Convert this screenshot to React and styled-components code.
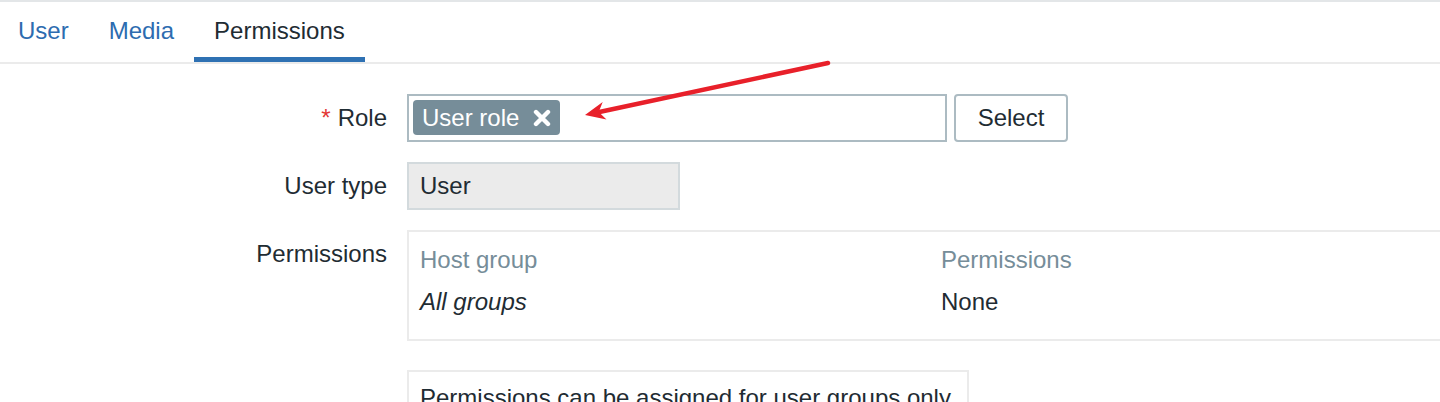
import React from 'react';
import styled, { createGlobalStyle, css } from 'styled-components';

const GlobalStyle = createGlobalStyle`
  html, body {
    margin: 0;
    overflow: hidden;
    background: #ffffff;
  }
  body {
    font-family: "Liberation Sans", Arial, Helvetica, sans-serif;
    font-size: 24px;
    color: #1f2c33;
  }
`;

const App = () => {
  return (
    <Page>
      <GlobalStyle />

      <TabBar>
        <TabList>
          <Tab>User</Tab>
          <Tab>Media</Tab>
          <Tab $active>Permissions</Tab>
        </TabList>
      </TabBar>

      <Form>
        <Label $required>Role</Label>
        <FieldRow>
          <MultiSelect>
            <Tag>
              User role
              <RemoveIcon viewBox="0 0 18 18">
                <path d="M3 3 L15 15 M15 3 L3 15" />
              </RemoveIcon>
            </Tag>
          </MultiSelect>
          <Button>Select</Button>
        </FieldRow>

        <Label>User type</Label>
        <ReadOnlyField>User</ReadOnlyField>

        <Label $top>Permissions</Label>
        <PermTable>
          <Cell $head>Host group</Cell>
          <Cell $head>Permissions</Cell>
          <Cell $italic>All groups</Cell>
          <Cell>None</Cell>
        </PermTable>

        <Note>Permissions can be assigned for user groups only.</Note>
      </Form>

      {/* annotation arrow drawn over the screenshot */}
      <Arrow viewBox="0 0 1440 402">
        <line x1="828" y1="63" x2="597" y2="112.5" />
        <polygon points="585,115 602.7,102 598.7,112.1 606.5,119.6" />
      </Arrow>
    </Page>
  );
};

const Page = styled.div`
  position: relative;
  width: 1440px;
  height: 402px;
  overflow: hidden;
`;

const TabBar = styled.div`
  height: 64px;
  box-sizing: border-box;
  border-top: 2px solid #e3e6e8;
  border-bottom: 2px solid #ebebeb;
`;

const TabList = styled.div`
  display: flex;
  margin-left: -2px;
`;

const Tab = styled.div`
  display: flex;
  align-items: center;
  height: 60px;
  box-sizing: border-box;
  padding: 3px 20px 0 20px;
  border-bottom: 5px solid transparent;
  color: #2d6cb0;
  line-height: 28px;

  ${(p) => p.$active && css`
    color: #1f2c33;
    border-bottom-color: #2f71b3;
  `}
`;

const Form = styled.div`
  display: grid;
  grid-template-columns: 387px max-content;
  column-gap: 20px;
  row-gap: 20px;
  padding-top: 30px;
`;

const Label = styled.div`
  grid-column: 1;
  text-align: right;
  line-height: 28px;
  align-self: ${(p) => (p.$top ? 'start' : 'center')};
  padding-top: ${(p) => (p.$top ? '10px' : '0')};

  ${(p) => p.$required && css`
    &::before {
      content: "*";
      color: #e33734;
      margin-right: 7px;
    }
  `}
`;

const FieldRow = styled.div`
  grid-column: 2;
  display: flex;
  gap: 7px;
`;

const MultiSelect = styled.div`
  width: 540px;
  height: 48px;
  box-sizing: border-box;
  border: 2px solid #acbbc2;
  padding: 4px;
  background: #ffffff;
`;

const Tag = styled.span`
  display: inline-flex;
  align-items: center;
  gap: 14px;
  height: 35px;
  padding: 0 9px;
  border-radius: 4px;
  background: #768d99;
  color: #ffffff;
  line-height: 35px;
`;

const RemoveIcon = styled.svg`
  width: 18px;
  height: 18px;
  fill: none;
  stroke: #ffffff;
  stroke-width: 4.4;
  stroke-linecap: round;
`;

const Button = styled.button`
  width: 114px;
  height: 48px;
  box-sizing: border-box;
  border: 2px solid #acbbc2;
  border-radius: 4px;
  background: #ffffff;
  color: #1f2c33;
  font-family: inherit;
  font-size: 24px;
  padding: 0;
`;

const ReadOnlyField = styled.div`
  grid-column: 2;
  display: flex;
  align-items: center;
  width: 273px;
  height: 48px;
  box-sizing: border-box;
  padding: 0 11px;
  border: 2px solid #d3dadd;
  background: #ebebeb;
`;

const PermTable = styled.div`
  grid-column: 2;
  display: grid;
  grid-template-columns: 521px 1fr;
  width: 1100px;
  box-sizing: border-box;
  padding: 7px 0 16px 0;
  border: 2px solid #ebebeb;
`;

const Cell = styled.div`
  padding: 7px 11px;
  line-height: 28px;
  color: ${(p) => (p.$head ? '#768d99' : '#1f2c33')};
  font-style: ${(p) => (p.$italic ? 'italic' : 'normal')};
`;

const Note = styled.div`
  grid-column: 2;
  justify-self: start;
  margin-top: 9px;
  padding: 12px 11px;
  line-height: 28px;
  border: 2px solid #ebebeb;
  white-space: nowrap;
`;

const Arrow = styled.svg`
  position: absolute;
  left: 0;
  top: 0;
  width: 1440px;
  height: 402px;
  pointer-events: none;

  line {
    stroke: #e8202a;
    stroke-width: 4.5;
    stroke-linecap: round;
  }
  polygon {
    fill: #e8202a;
  }
`;

export default App;
